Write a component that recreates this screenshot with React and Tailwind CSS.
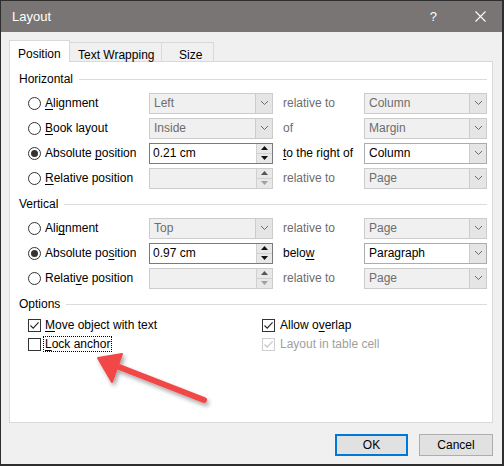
import React from 'react';

const Key = ({ pre = '', k = '', post = '' }) => (
  <span>
    {pre}
    <span className="underline underline-offset-2">{k}</span>
    {post}
  </span>
);

const Radio = ({ checked }) => (
  <span className="w-[13px] h-[13px] rounded-full border border-[#333333] bg-white flex items-center justify-center shrink-0">
    {checked && <span className="w-[7px] h-[7px] rounded-full bg-[#333333]" />}
  </span>
);

const Check = ({ checked, disabled }) => (
  <span
    className={`w-[13px] h-[13px] border bg-white flex items-center justify-center shrink-0 ${
      disabled ? 'border-[#cfcfcf]' : 'border-[#333333]'
    }`}
  >
    {checked && (
      <svg width="11" height="11" viewBox="0 0 11 11">
        <path d="M1.5 5.5 L4.2 8.2 L9.6 2.4" fill="none" stroke={disabled ? '#c4c4c4' : '#222222'} strokeWidth="1.1" />
      </svg>
    )}
  </span>
);

const Chevron = () => (
  <svg width="9" height="6" viewBox="0 0 9 6">
    <path d="M1 1 L4.5 4.5 L8 1" fill="none" stroke="#6a6a6a" strokeWidth="1" />
  </svg>
);

const Dropdown = ({ value, disabled, w = 'w-[124px]' }) => (
  <div
    className={`flex h-[21px] ${w} border ${
      disabled ? 'border-[#cccccc] bg-[#f0f0f0] text-[#6d6d6d]' : 'border-[#acacac] bg-white text-black'
    }`}
  >
    <div className="flex-1 flex items-center pl-[4px]">{value}</div>
    <div className="w-[17px] border-l border-[#cccccc] bg-[#e5e5e5] flex items-center justify-center">
      <Chevron />
    </div>
  </div>
);

const SpinBox = ({ value, disabled }) => (
  <div
    className={`flex h-[21px] w-[124px] border ${
      disabled ? 'border-[#cccccc] bg-[#f0f0f0]' : 'border-[#7a7a7a] bg-white'
    }`}
  >
    <div className="flex-1 flex items-center pl-[3px] text-black">{value}</div>
    <div className="w-[16px] flex flex-col border-l border-[#d0d0d0] bg-[#e8e8e8]">
      <div className="flex-1 flex items-center justify-center border-b border-[#d0d0d0]">
        <svg width="7" height="4" viewBox="0 0 7 4">
          <path d="M0 4 L3.5 0 L7 4 Z" fill={disabled ? '#555555' : '#111111'} />
        </svg>
      </div>
      <div className="flex-1 flex items-center justify-center">
        <svg width="7" height="4" viewBox="0 0 7 4">
          <path d="M0 0 L3.5 4 L7 0 Z" fill={disabled ? '#a0a0a0' : '#111111'} />
        </svg>
      </div>
    </div>
  </div>
);

const Row = ({ checked, label, control, mid, midDisabled = true, right }) => (
  <div className="flex items-center h-[22px]">
    <div className="w-[121px] flex items-center gap-[4px]">
      <Radio checked={checked} />
      {label}
    </div>
    {control}
    <div className={`w-[91px] pl-[10px] ${midDisabled ? 'text-[#6d6d6d]' : 'text-black'}`}>{mid}</div>
    {right}
  </div>
);

const Heading = ({ children, className = '' }) => (
  <div className={`flex items-center h-[14px] ${className}`}>
    <span className="pr-[6px]">{children}</span>
    <div className="flex-1 h-px bg-[#dcdcdc] mr-[5px]" />
  </div>
);

export default function App() {
  return (
    <div className="relative w-[504px] h-[466px] bg-[#f0f0f0] border-l border-t border-r-2 border-b-2 border-[#2e2e2e] font-['Liberation_Sans',Arial,sans-serif] text-[12px] text-black overflow-hidden">
      {/* title bar */}
      <div className="h-[31px] bg-[#797574] flex items-center text-white">
        <span className="pl-[11px] text-[13px]">Layout</span>
        <span className="ml-auto text-[13px] mr-[38px]">?</span>
        <svg className="mr-[16px]" width="11" height="11" viewBox="0 0 11 11">
          <path d="M0.5 0.5 L10.5 10.5 M10.5 0.5 L0.5 10.5" stroke="white" strokeWidth="1.1" />
        </svg>
      </div>

      <div className="px-[8px] pt-[8px]">
        {/* tabs */}
        <div className="flex items-end h-[21px]">
          <div className="h-[22px] w-[61px] bg-white border border-b-0 border-[#d9d9d9] pl-[8px] pt-[4px] relative z-10 -mb-px">
            Position
          </div>
          <div className="h-[19px] w-[92px] border-t border-r border-[#d9d9d9] pl-[8px] pt-[3px]">Text Wrapping</div>
          <div className="h-[19px] w-[52px] border-t border-r border-[#d9d9d9] pl-[17px] pt-[3px]">Size</div>
        </div>

        {/* panel */}
        <div className="w-[484px] h-[362px] bg-white border border-[#d9d9d9] pl-[9px] pt-[10px]">
          <Heading>Horizontal</Heading>
          <div className="mt-[6px] pl-[9px] flex flex-col gap-[3px]">
            <Row
              label={<Key k="A" post="lignment" />}
              control={<Dropdown value="Left" disabled />}
              mid="relative to"
              right={<Dropdown value="Column" disabled w="w-[123px]" />}
            />
            <Row
              label={<Key k="B" post="ook layout" />}
              control={<Dropdown value="Inside" disabled />}
              mid="of"
              right={<Dropdown value="Margin" disabled w="w-[123px]" />}
            />
            <Row
              checked
              label={<Key pre="Absolute " k="p" post="osition" />}
              control={<SpinBox value="0.21 cm" />}
              mid={<Key k="t" post="o the right of" />}
              midDisabled={false}
              right={<Dropdown value="Column" w="w-[123px]" />}
            />
            <Row
              label={<Key k="R" post="elative position" />}
              control={<SpinBox value="" disabled />}
              mid="relative to"
              right={<Dropdown value="Page" disabled w="w-[123px]" />}
            />
          </div>

          <Heading className="mt-[8px]">Vertical</Heading>
          <div className="mt-[6px] pl-[9px] flex flex-col gap-[3px]">
            <Row
              label={<Key pre="Ali" k="g" post="nment" />}
              control={<Dropdown value="Top" disabled />}
              mid="relative to"
              right={<Dropdown value="Page" disabled w="w-[123px]" />}
            />
            <Row
              checked
              label={<Key pre="Absolute po" k="s" post="ition" />}
              control={<SpinBox value="0.97 cm" />}
              mid={<Key pre="belo" k="w" />}
              midDisabled={false}
              right={<Dropdown value="Paragraph" w="w-[123px]" />}
            />
            <Row
              label={<Key pre="Relati" k="v" post="e position" />}
              control={<SpinBox value="" disabled />}
              mid="relative to"
              right={<Dropdown value="Page" disabled w="w-[123px]" />}
            />
          </div>

          <Heading className="mt-[8px]">Options</Heading>
          <div className="mt-[6px] pl-[9px] grid grid-cols-[234px_1fr] gap-y-[3px]">
            <div className="flex items-center gap-[4px] h-[16px]">
              <Check checked />
              <Key k="M" post="ove object with text" />
            </div>
            <div className="flex items-center gap-[5px] h-[16px]">
              <Check checked />
              <Key pre="Allow o" k="v" post="erlap" />
            </div>
            <div className="flex items-center gap-[2px] h-[16px]">
              <Check />
              <span className="border border-dotted border-black px-[1px] leading-[14px]">
                <Key k="L" post="ock anchor" />
              </span>
            </div>
            <div className="flex items-center gap-[5px] h-[16px] text-[#a0a0a0]">
              <Check checked disabled />
              <span>Layout in table cell</span>
            </div>
          </div>
        </div>

        {/* buttons */}
        <div className="flex justify-end gap-[11px] mt-[11px] pr-[1px]">
          <button className="w-[73px] h-[22px] bg-[#e1e1e1] border-2 border-[#0078d7]">OK</button>
          <button className="w-[74px] h-[22px] bg-[#e1e1e1] border border-[#adadad]">Cancel</button>
        </div>
      </div>

      {/* annotation arrow */}
      <svg className="absolute left-0 top-0 pointer-events-none" width="504" height="466" viewBox="0 0 504 466">
        <defs>
          <filter id="sh" x="-20%" y="-20%" width="140%" height="140%">
            <feDropShadow dx="2" dy="3" stdDeviation="2" floodColor="#000000" floodOpacity="0.35" />
          </filter>
        </defs>
        <g filter="url(#sh)">
          <path d="M203 399 L113 364" stroke="#f24747" strokeWidth="6" strokeLinecap="round" />
          <path d="M97 357 L121 353 L111 381 Z" fill="#f24747" stroke="#f24747" strokeWidth="2" strokeLinejoin="round" />
        </g>
      </svg>
    </div>
  );
}
